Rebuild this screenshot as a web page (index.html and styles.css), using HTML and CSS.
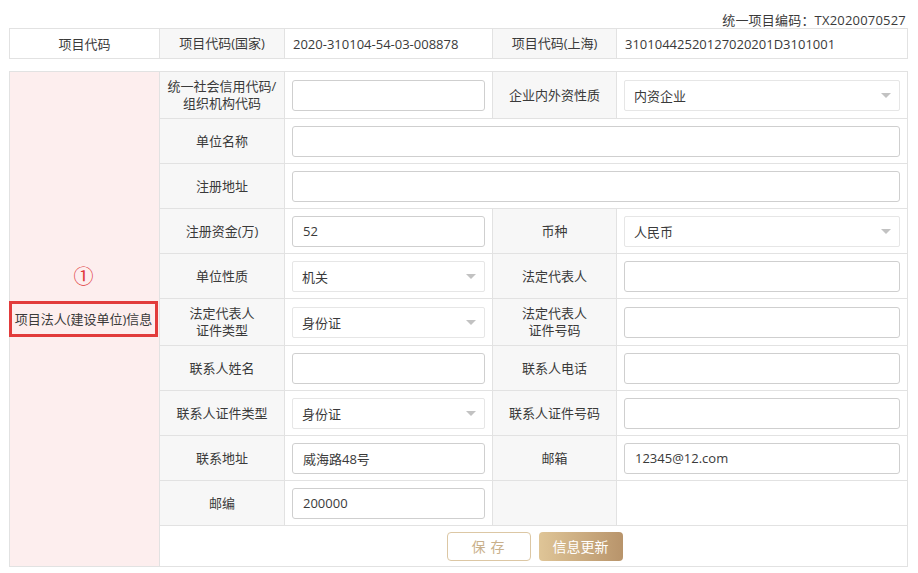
FILE: index.html
```html
<!DOCTYPE html>
<html lang="zh-CN">
<head>
<meta charset="utf-8">
<title>项目法人信息</title>
<link rel="stylesheet" href="styles.css">
</head>
<body>
<div class="page">
  <div class="code-line">统一项目编码：TX2020070527</div>
  <table class="grid top">
    <colgroup><col class="c1"><col class="c2"><col class="c3"><col class="c4"><col class="c5"></colgroup>
    <tr>
      <td class="plain">项目代码</td>
      <td class="label">项目代码(国家)</td>
      <td class="value">2020-310104-54-03-008878</td>
      <td class="label">项目代码(上海)</td>
      <td class="value">31010442520127020201D3101001</td>
    </tr>
  </table>

  <table class="grid form">
    <colgroup><col class="c1"><col class="c2"><col class="c3"><col class="c4"><col class="c5"></colgroup>
    <tr class="tall">
      <td class="side" rowspan="11">
        <div class="side-wrap">
          <span class="badge">①</span>
          <div class="side-box">项目法人(建设单位)信息</div>
        </div>
      </td>
      <td class="label two">统一社会信用代码/<br>组织机构代码</td>
      <td class="cell"><input class="field" type="text" value=""></td>
      <td class="label">企业内外资性质</td>
      <td class="cell"><div class="select"><span>内资企业</span><i class="arrow"></i></div></td>
    </tr>
    <tr>
      <td class="label">单位名称</td>
      <td class="cell" colspan="3"><input class="field" type="text" value=""></td>
    </tr>
    <tr>
      <td class="label">注册地址</td>
      <td class="cell" colspan="3"><input class="field" type="text" value=""></td>
    </tr>
    <tr>
      <td class="label">注册资金(万)</td>
      <td class="cell"><input class="field" type="text" value="52"></td>
      <td class="label">币种</td>
      <td class="cell"><div class="select"><span>人民币</span><i class="arrow"></i></div></td>
    </tr>
    <tr>
      <td class="label">单位性质</td>
      <td class="cell"><div class="select"><span>机关</span><i class="arrow"></i></div></td>
      <td class="label">法定代表人</td>
      <td class="cell"><input class="field" type="text" value=""></td>
    </tr>
    <tr class="tall">
      <td class="label two">法定代表人<br>证件类型</td>
      <td class="cell"><div class="select"><span>身份证</span><i class="arrow"></i></div></td>
      <td class="label two">法定代表人<br>证件号码</td>
      <td class="cell"><input class="field" type="text" value=""></td>
    </tr>
    <tr>
      <td class="label">联系人姓名</td>
      <td class="cell"><input class="field" type="text" value=""></td>
      <td class="label">联系人电话</td>
      <td class="cell"><input class="field" type="text" value=""></td>
    </tr>
    <tr>
      <td class="label">联系人证件类型</td>
      <td class="cell"><div class="select"><span>身份证</span><i class="arrow"></i></div></td>
      <td class="label">联系人证件号码</td>
      <td class="cell"><input class="field" type="text" value=""></td>
    </tr>
    <tr>
      <td class="label">联系地址</td>
      <td class="cell"><input class="field" type="text" value="威海路48号"></td>
      <td class="label">邮箱</td>
      <td class="cell"><input class="field" type="text" value="12345@12.com"></td>
    </tr>
    <tr>
      <td class="label">邮编</td>
      <td class="cell"><input class="field" type="text" value="200000"></td>
      <td class="label"></td>
      <td class="cell"></td>
    </tr>
    <tr class="actions">
      <td colspan="4" class="btn-cell">
        <div class="btns">
          <button class="btn btn-save" type="button">保 存</button>
          <button class="btn btn-update" type="button">信息更新</button>
        </div>
      </td>
    </tr>
  </table>
</div>
</body>
</html>
```

FILE: styles.css
```css
* { box-sizing: border-box; }
html, body { margin: 0; padding: 0; background: #fff; }
body {
  font-family: "Open Sans", "Noto Sans CJK SC", sans-serif;
  font-size: 13px;
  color: #3a3a3a;
}
.page {
  width: 918px;
  padding: 0 11px 0 9px;
}
.code-line {
  height: 28px;
  padding-top: 12px;
  line-height: 16px;
  text-align: right;
  padding-right: 1px;
  color: #3a3a3a;
  letter-spacing: 0.2px;
}
.grid {
  width: 898px;
  border-collapse: collapse;
  table-layout: fixed;
}
.grid td {
  border: 1px solid #e2e2e2;
  padding: 0;
  vertical-align: middle;
}
.c1 { width: 150px; }
.c2 { width: 125px; }
.c3 { width: 208px; }
.c4 { width: 124px; }
.c5 { width: 291px; }

.top tr { height: 30px; }
.top .plain { text-align: center; background: #fff; }
.top .value { padding-left: 8px; }

.form { margin-top: 12px; }
.form tr { height: 45px; }
.form tr.tall { height: 47px; }
.form tr.actions { height: 41px; }

.label {
  background: #f7f7f7;
  text-align: center;
  line-height: 17px;
}
.cell { padding: 0 7px !important; background: #fff; }

.side {
  background: #fdeeee;
  text-align: center;
}
.side-wrap {
  position: relative;
  display: flex;
  justify-content: center;
  margin-left: -2px;
}
.badge {
  position: absolute;
  left: 0;
  right: 0;
  top: -37px;
  text-align: center;
  color: #e0393b;
  font-size: 20px;
  line-height: 24px;
  font-family: "Noto Sans CJK SC", sans-serif;
  font-weight: 400;
}
.side-box {
  width: 149px;
  height: 36px;
  border: 3px solid #e23b3b;
  line-height: 30px;
  font-size: 13px;
  color: #3a3a3a;
  white-space: nowrap;
}

.field {
  display: block;
  width: 100%;
  height: 31px;
  border: 1px solid #cfcfcf;
  border-radius: 3px;
  padding: 0 10px;
  font-family: "Open Sans", "Noto Sans CJK SC", sans-serif;
  font-size: 13px;
  color: #3a3a3a;
  background: #fff;
  outline: none;
}
.select {
  display: flex;
  align-items: center;
  justify-content: space-between;
  height: 31px;
  border: 1px solid #e6e6e6;
  border-radius: 2px;
  padding: 0 8px 0 9px;
  background: #fff;
  color: #3a3a3a;
}
.arrow {
  width: 0;
  height: 0;
  border-left: 5px solid transparent;
  border-right: 5px solid transparent;
  border-top: 5px solid #c2c2c2;
}

.btn-cell { background: #fff; }
.btns {
  display: flex;
  justify-content: center;
  gap: 8px;
  padding-left: 2px;
}
.btn {
  width: 84px;
  height: 29px;
  border-radius: 4px;
  font-family: "Noto Sans CJK SC", sans-serif;
  font-size: 14px;
  padding: 0;
  cursor: pointer;
}
.btn-save {
  background: #fff;
  border: 1px solid #dcc7a4;
  color: #c9b08b;
  letter-spacing: 1px;
}
.btn-update {
  border: none;
  color: #fff;
  background: linear-gradient(to right, #dfc597, #b8946b);
}
```
